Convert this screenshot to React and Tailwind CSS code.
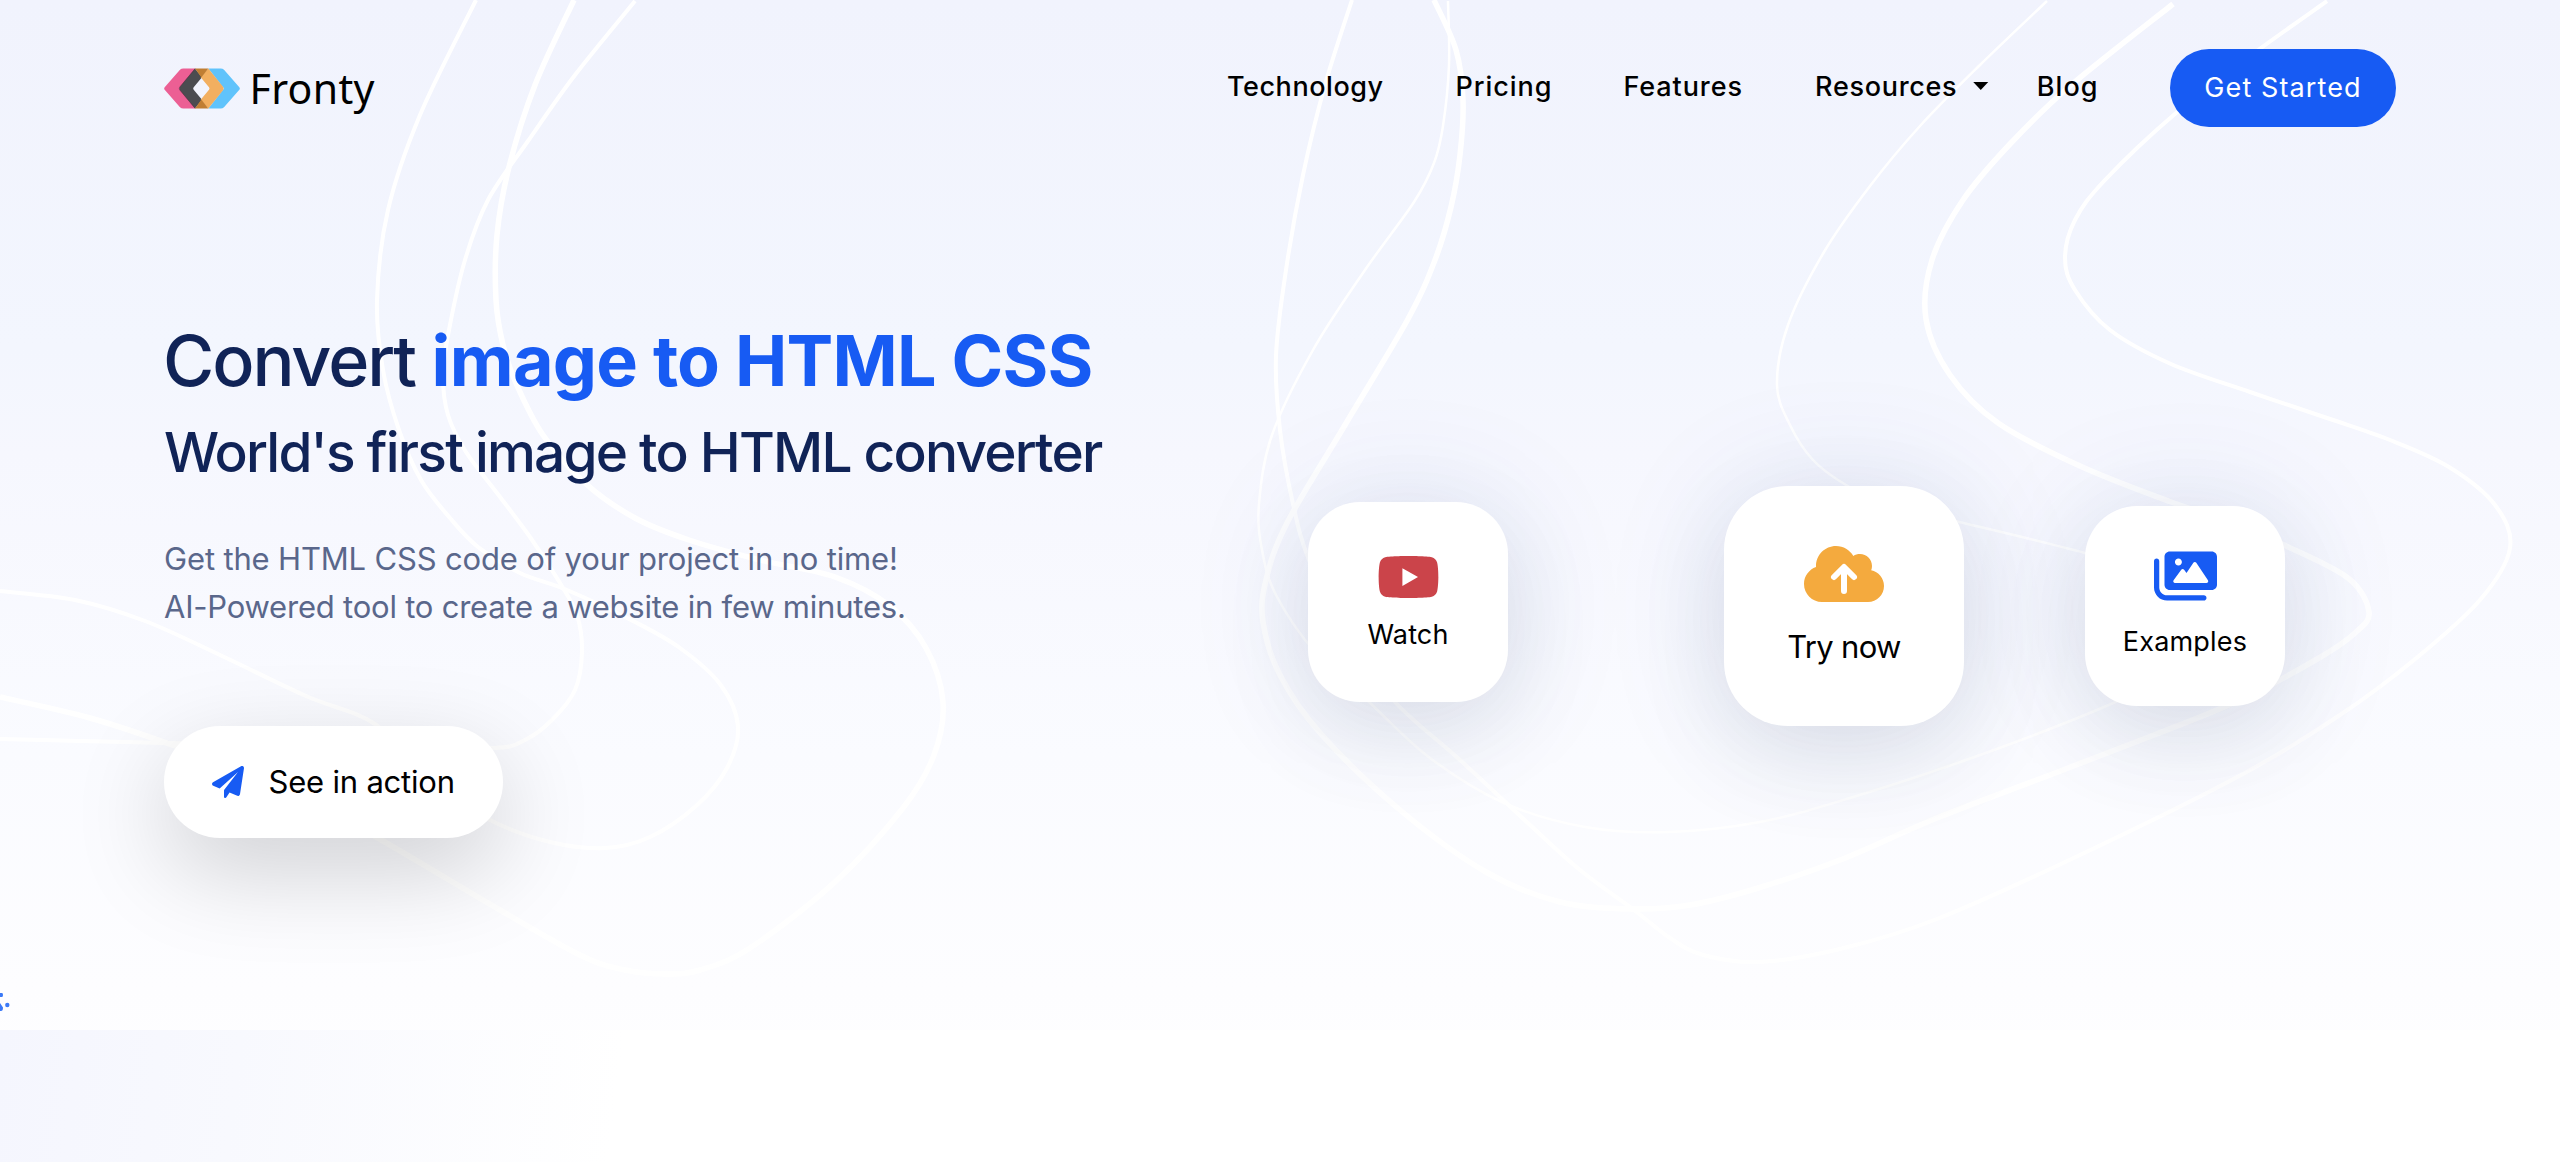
const SWIRLS = [
  {
    width: 4,
    points: [[476, 0], [420, 115], [388, 210], [377, 300], [383, 370], [399, 430], [421, 480], [450, 518], [478, 547], [520, 573], [567, 590], [635, 622], [680, 648], [720, 684], [738, 726], [727, 768], [696, 806], [650, 837], [605, 848], [550, 842], [490, 820], [420, 775], [375, 724], [306, 696], [220, 655], [145, 621], [75, 600], [0, 591]],
  },
  {
    width: 5.5,
    points: [[574, 0], [535, 85], [509, 167], [497, 235], [496, 300], [503, 345], [516, 383], [543, 435], [585, 483], [635, 518], [689, 540], [760, 560], [835, 577], [890, 606], [926, 648], [943, 702], [934, 755], [903, 808], [835, 882], [750, 948], [700, 970], [666, 974], [625, 970], [582, 956], [500, 910], [383, 841], [290, 790], [172, 745], [90, 718], [0, 697]],
  },
  {
    width: 4,
    points: [[635, 1], [575, 75], [528, 141], [488, 200], [465, 260], [449, 330], [443, 375], [448, 415], [466, 452], [497, 493], [530, 537], [560, 583], [577, 615], [582, 652], [575, 690], [552, 720], [525, 740], [494, 748], [400, 745], [300, 745], [165, 743], [80, 741], [0, 739]],
  },
  {
    width: 4,
    points: [[1352, 0], [1325, 85], [1303, 175], [1286, 270], [1276, 356], [1280, 430], [1293, 504], [1309, 560], [1345, 635], [1395, 702], [1460, 760], [1530, 825], [1580, 870], [1634, 910], [1670, 938], [1703, 955], [1759, 962], [1840, 949], [1937, 919], [2080, 855], [2241, 775], [2340, 715], [2414, 660], [2480, 600], [2510, 548], [2495, 505], [2449, 467], [2390, 440], [2327, 418], [2250, 392], [2171, 364], [2110, 330], [2075, 290], [2065, 258], [2075, 220], [2105, 180], [2176, 113], [2250, 56], [2327, 1]],
  },
  {
    width: 5.5,
    points: [[1434, 0], [1456, 50], [1463, 100], [1460, 155], [1451, 207], [1435, 260], [1408, 319], [1345, 425], [1287, 523], [1266, 580], [1263, 622], [1280, 675], [1321, 734], [1400, 810], [1486, 872], [1560, 902], [1634, 909], [1690, 905], [1755, 889], [1840, 860], [1937, 818], [2050, 775], [2154, 735], [2240, 700], [2319, 658], [2355, 633], [2369, 612], [2348, 578], [2284, 545], [2225, 520], [2171, 502], [2080, 466], [1998, 423], [1950, 375], [1926, 319], [1932, 260], [1963, 200], [2010, 144], [2070, 86], [2173, 4]],
  },
  {
    width: 2.5,
    points: [[1448, 1], [1449, 65], [1443, 126], [1434, 163], [1414, 202], [1365, 270], [1313, 350], [1272, 435], [1259, 504], [1262, 550], [1276, 595], [1315, 652], [1369, 702], [1430, 758], [1504, 803], [1585, 827], [1668, 832], [1760, 822], [1850, 798], [1980, 755], [2111, 704], [2210, 655], [2235, 620], [2190, 585], [2085, 553], [1955, 521], [1890, 506], [1846, 485], [1813, 460], [1790, 425], [1777, 385], [1788, 325], [1824, 252], [1870, 186], [1920, 126], [1980, 65], [2047, 1]],
  },
];

function smoothPath(pts) {
  let d = `M${pts[0][0]} ${pts[0][1]}`;
  for (let i = 0; i < pts.length - 1; i++) {
    const p0 = pts[i - 1] || pts[i];
    const p1 = pts[i];
    const p2 = pts[i + 1];
    const p3 = pts[i + 2] || p2;
    d += `C${p1[0] + (p2[0] - p0[0]) / 6} ${p1[1] + (p2[1] - p0[1]) / 6} ${p2[0] - (p3[0] - p1[0]) / 6} ${p2[1] - (p3[1] - p1[1]) / 6} ${p2[0]} ${p2[1]}`;
  }
  return d;
}

function Swirls() {
  return (
    <svg className="absolute inset-0 h-[1030px] w-[2560px]" viewBox="0 0 2560 1030" fill="none" stroke="#fff">
      {SWIRLS.map((s, i) => (
        <path key={i} d={smoothPath(s.points)} strokeWidth={s.width} />
      ))}
    </svg>
  );
}

function LogoMark() {
  return (
    <svg className="h-[41px] w-[76px]" viewBox="12 14 228 122">
      <path fill="#ec5f94" d="M14 71 60 19Q64 15 70 15H106L58 75 106 135H70Q64 135 60 131L14 79Q11 75 14 71Z" />
      <path fill="#60c3fb" d="M145 15H182Q188 15 192 19L238 71Q241 75 238 79L192 131Q188 135 182 135H145L192 75Z" />
      <path fill="#4b4c50" d="M105 15 126 41 101 71Q98 75 101 79L126 109 105 135 60 80Q56 75 60 70Z" />
      <path fill="#f2af60" d="M145 15 189 70Q193 75 189 80L145 135 122 109 147 79Q150 75 147 71L122 41Z" />
      <path fill="#c07e33" d="M105 15H145L124 42ZM105 135H145L124 108Z" />
      <path fill="none" stroke="#5a2a3f" strokeWidth="3" d="M105 16 60 70Q56 75 60 80L105 134" opacity=".6" />
    </svg>
  );
}

const NAV = [
  { label: "Technology", cls: "tracking-[0.567px]" },
  { label: "Pricing", cls: "ml-[71.8px] tracking-[0.95px]" },
  { label: "Features", cls: "ml-[71px] tracking-[0.913px]" },
  { label: "Resources", cls: "ml-[72.2px] tracking-[0.694px]", caret: true },
  { label: "Blog", cls: "ml-[48.2px] tracking-[1.052px]" },
];

function Header() {
  return (
    <header className="relative flex h-[78px] items-center justify-between">
      <a className="flex items-center gap-[9.5px]">
        <LogoMark />
        <span className="font-['Noto_Sans',sans-serif] text-[41px] leading-[56px] tracking-[0.35px] text-black">Fronty</span>
      </a>
      <nav className="flex items-center">
        {NAV.map((n) => (
          <a key={n.label} className={`flex items-center pb-[2px] text-[27px] leading-[40px] font-medium text-black ${n.cls}`}>
            {n.label}
            {n.caret && (
              <svg className="mb-[2px] ml-[15.8px] h-[8px] w-[15.5px]" viewBox="0 0 15 8">
                <path d="M0 0H15L7.5 8Z" />
              </svg>
            )}
          </a>
        ))}
        <a className="ml-[71.4px] flex h-[78px] w-[226px] items-center justify-center rounded-full bg-[#175bf3] pt-px text-[27px] tracking-[1.1px] text-white">
          Get Started
        </a>
      </nav>
    </header>
  );
}

function PlaneIcon() {
  return (
    <svg className="size-[32px]" viewBox="0 0 512 512" fill="#175bf3">
      <path d="M511.6 36.86l-64 415.1c-1.5 9.734-7.375 18.22-15.97 23.05c-4.844 2.719-10.27 4.097-15.68 4.097c-4.188 0-8.319-.8154-12.29-2.472l-122.6-51.1l-50.86 76.29C226.3 508.5 219.8 512 212.8 512C201.3 512 192 502.7 192 491.2v-96.18c0-7.115 2.372-14.03 6.742-19.64L416 96l-293.7 264.3L19.69 317.5C8.438 312.8 .8125 302.2 .0625 289.1s5.469-23.72 16.06-29.77l448-255.1c10.69-6.109 23.88-5.547 34 1.406S513.5 24.72 511.6 36.86z" />
    </svg>
  );
}

function YoutubeIcon() {
  return (
    <svg className="h-[56px] w-[63px]" viewBox="0 0 576 512" fill="#cb444a">
      <path d="M549.655 124.083c-6.281-23.65-24.787-42.276-48.284-48.597C458.781 64 288 64 288 64S117.22 64 74.629 75.486c-23.497 6.322-42.003 24.947-48.284 48.597-11.412 42.867-11.412 132.305-11.412 132.305s0 89.438 11.412 132.305c6.281 23.65 24.787 41.5 48.284 47.821C117.22 448 288 448 288 448s170.78 0 213.371-11.486c23.497-6.321 42.003-24.171 48.284-47.821 11.412-42.867 11.412-132.305 11.412-132.305s0-89.438-11.412-132.305zm-317.51 213.508V175.185l142.739 81.205-142.739 81.201z" />
    </svg>
  );
}

function CloudIcon() {
  return (
    <svg className="h-[64px] w-[80px]" viewBox="0 0 640 512">
      <path
        fill="#f4aa3e"
        d="M144 480C64.47 480 0 415.5 0 336C0 273.2 40.17 219.8 96.2 200.1C96.07 197.4 96 194.7 96 192C96 103.6 167.6 32 256 32C315.3 32 367 64.25 394.7 112.2C409.9 101.1 428.3 96 448 96C501 96 544 138.1 544 192C544 204.2 541.7 215.8 537.6 226.6C596 238.4 640 290.1 640 352C640 422.7 582.7 480 512 480H144z"
      />
      <path d="M240 280 320 200 400 280M320 204V392" fill="none" stroke="#fff" strokeWidth="48" strokeLinecap="round" strokeLinejoin="round" />
    </svg>
  );
}

function ImagesIcon() {
  return (
    <svg className="h-[56px] w-[63px]" viewBox="0 0 576 512" fill="#175bf3">
      <path d="M528 32H144c-26.51 0-48 21.49-48 48v256c0 26.51 21.49 48 48 48H528c26.51 0 48-21.49 48-48v-256C576 53.49 554.5 32 528 32zM223.1 96c17.68 0 32 14.33 32 32S241.7 160 223.1 160c-17.67 0-32-14.33-32-32S206.3 96 223.1 96zM494.1 311.6C491.3 316.8 485.9 320 480 320H192c-6.023 0-11.53-3.379-14.26-8.75c-2.73-5.367-2.215-11.81 1.332-16.68l70-96C252.1 194.4 256.9 192 262 192c5.111 0 9.916 2.441 12.93 6.574l22.35 30.66l62.74-94.11C362.1 130.7 367.1 128 373.3 128c5.348 0 10.34 2.672 13.31 7.125l106.7 160C496.6 300 496.9 306.3 494.1 311.6zM456 432H120c-39.7 0-72-32.3-72-72v-240C48 106.8 37.25 96 24 96S0 106.8 0 120v240C0 426.2 53.83 480 120 480h336c13.25 0 24-10.75 24-24S469.3 432 456 432z" />
    </svg>
  );
}

const CARD =
  "flex flex-col items-center bg-white text-black shadow-[0_4px_130px_rgba(23,70,170,0.11),0_28px_96px_rgba(0,0,0,0.08)]";

export default function App() {
  return (
    <main className="h-[1162px] w-[2560px] overflow-hidden bg-[linear-gradient(180deg,#f1f3fd_0%,#f3f6fe_30%,#f6f7fe_39%,#fafbff_65%,#fdfdff_85%,#fff_100%)] font-['Inter',sans-serif]">
      <section className="relative h-[1030px] px-[164px] pt-[49px]">
        <Swirls />
        <Header />
        <div className="relative flex items-start">
          <div className="flex w-[1144px] flex-col items-start pt-[192px]">
            <h1 className="flex items-baseline text-[70px] leading-[84px] whitespace-nowrap text-[#102357]">
              <span className="-ml-px font-[450] tracking-[-2.1px]">Convert&nbsp;</span>
              <span className="font-bold tracking-[-0.78px] text-[#175bf3]">image to HTML CSS</span>
            </h1>
            <h2 className="mt-[16px] text-[55px] leading-[66px] font-medium tracking-[-1.8px] whitespace-nowrap text-[#102357]">
              World's first image to HTML converter
            </h2>
            <p className="mt-[50px] text-[31px] leading-[48px] text-[#5a678b]">
              <span className="tracking-[-0.16px]">Get the HTML CSS code of your project in no time!</span>
              <br />
              <span className="tracking-[-0.22px]">AI-Powered tool to create a website in few minutes.</span>
            </p>
            <a className="mt-[95px] flex h-[112px] w-[339px] items-center rounded-full bg-white pl-[48px] text-[31px] tracking-[-0.2px] text-black shadow-[0_32px_96px_rgba(0,0,0,0.175)]">
              <PlaneIcon />
              <span className="mt-px ml-[24.5px]">See in action</span>
            </a>
          </div>
          <div className="flex items-start">
            <a className={`mt-[375px] h-[200px] w-[200px] rounded-[52px] pt-[47px] ${CARD}`}>
              <YoutubeIcon />
              <span className="mt-[10px] text-[27px] leading-[40px] tracking-[0.15px]">Watch</span>
            </a>
            <a className={`mt-[359px] ml-[216px] h-[240px] w-[240px] rounded-[64px] pt-[56px] ${CARD}`}>
              <CloudIcon />
              <span className="mt-[17px] text-[31px] leading-[48px] tracking-[-0.7px]">Try now</span>
            </a>
            <a className={`mt-[379px] ml-[121px] h-[200px] w-[200px] rounded-[52px] pt-[42px] ${CARD}`}>
              <ImagesIcon />
              <span className="mt-[18px] text-[27px] leading-[40px] tracking-[0.2px]">Examples</span>
            </a>
          </div>
        </div>
        <svg className="absolute top-[990px] left-0 h-[24px] w-[12px]" viewBox="0 0 12 24" fill="#3b79f7">
          <path d="M0 3H2Q3 3 3 5T2 7H0ZM0 13 3 17.5Q3 21 1 21H0Z" />
          <circle cx="7.3" cy="15" r="2.2" />
        </svg>
      </section>
      <section className="h-[132px] bg-[linear-gradient(97deg,#f5f6fe_0px,#f8f9fe_240px,#fff_620px)]" />
    </main>
  );
}
